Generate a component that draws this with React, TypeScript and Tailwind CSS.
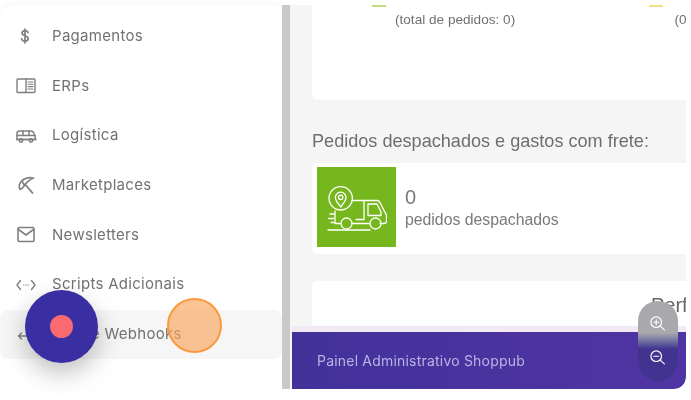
import React from "react";

const side = "font-['Inter','Noto_Sans',sans-serif]";

function Item({ icon, label, active }: { icon: React.ReactNode; label: string; active?: boolean }) {
  return (
    <div className={`flex h-[49.7px] items-center ${active ? "rounded-lg bg-[#f6f6f6]" : ""}`}>
      <div className="flex w-[52px] justify-center text-[#808080]">{icon}</div>
      <span className="text-[15px] tracking-[0.3px] text-[#727272]">{label}</span>
    </div>
  );
}

const s = { fill: "none", stroke: "currentColor", strokeWidth: 1.4, strokeLinecap: "round" as const, strokeLinejoin: "round" as const };

const Dollar = () => (
  <svg width="20" height="20" viewBox="0 0 20 20" className="-ml-[2px]" {...s} strokeWidth={1.7}>
    <path d="M13 6.600c-.3-1.300-1.500-2-3-2-1.800 0-3 1-3 2.500 0 3.400 6.200 2 6.200 5.500 0 1.500-1.400 2.500-3.200 2.500-1.700 0-3-.8-3.300-2.200M10 3v14" />
  </svg>
);
const Erp = () => (
  <svg width="22" height="18" viewBox="0 0 22 18" {...s}>
    <rect x="2" y="2" width="18" height="13.500" rx="1" />
    <path d="M11 2v13.500" />
    <path d="M13 5h5M13 7.300h5M13 9.600h5M13 12h5" strokeWidth="1.100" />
  </svg>
);
const Van = () => (
  <svg width="22" height="18" viewBox="0 0 22 18" {...s} strokeWidth={1.5}>
    <path d="M2 12.500V6.500C2 5 3 4 4.500 4h11.500C17.500 4 18.500 5 19 6.500l1.200 3v3z" />
    <path d="M2 8.500h18M8 4v4.500M14 4v4.500M1.500 12.500h19.500" />
    <circle cx="6" cy="13.500" r="1.700" />
    <circle cx="16" cy="13.500" r="1.700" />
  </svg>
);
const Market = () => (
  <svg width="20" height="20" viewBox="0 0 20 20" {...s} strokeWidth={1.7}>
    <path d="M17.500 3C11.500 1.800 5.500 4 3.500 9.500c-.5 1.800-.3 3.500.5 5 1.600-.5 2.800-1.400 3.600-2.800C9.500 8.500 12 5 17.500 3z" />
    <path d="M9 9.500 C 11 11 13 14 16.500 18M6.500 7l2 3.500" />
  </svg>
);
const Mail = () => (
  <svg width="20" height="18" viewBox="0 0 20 18" {...s} strokeWidth={1.6}>
    <rect x="2" y="1.500" width="16" height="14" rx="1.200" />
    <path d="m2.500 3.500 7.500 5.500 7.500-5.500" />
  </svg>
);
const Code = () => (
  <svg width="22" height="16" viewBox="0 0 22 16" {...s}>
    <path d="M5.500 3.500 2 8l3.500 4.500M16.500 3.500 20 8l-3.500 4.500" />
    <path d="M8.500 8h.4M10.800 8h.4M13.100 8h.4" strokeWidth="1.200" />
  </svg>
);
const Arrows = () => (
  <svg width="20" height="18" viewBox="0 0 20 18" {...s}>
    <path d="M2.500 11h15M5.500 8l-3 3 3 3" />
  </svg>
);

const Truck = () => (
  <svg width="60" height="45" viewBox="0 0 60 45" fill="none" stroke="white" strokeWidth="1.300" strokeLinecap="round" strokeLinejoin="round">
    <circle cx="13.700" cy="12.300" r="11.700" />
    <path d="M13.700 21c-2.500-3.500-5.300-6-5.300-9.500a5.300 5.300 0 0 1 10.600 0c0 3.500-2.800 6-5.300 9.500z" />
    <circle cx="13.700" cy="11.300" r="2.200" />
    <path d="M25 14.500h25c1.500 0 2.500 1 3 2l5 10c1 1 1.500 2 1.500 3.500v5c0 1.500-1 2.500-2.500 2.500h-4" />
    <path d="M8 25v12.500h5M25 37.500h17.500M37 14.500v19h-8" />
    <path d="M41 18h9l4 8v3.500H41z" />
    <circle cx="19.500" cy="37.500" r="5.500" />
    <circle cx="48.500" cy="37.500" r="5.500" />
    <path d="M3 28h4M1.500 32.500h5M4 36.500h3M1 44h42" />
  </svg>
);

const ZoomIcon = ({ plus }: { plus?: boolean }) => (
  <svg width="17" height="17" viewBox="0 0 16 16" fill="none" stroke="white" strokeWidth="1.100" strokeLinecap="round">
    <circle cx="6.800" cy="6.800" r="5" />
    <path d="m10.500 10.500 4 3.500M4.500 6.800h4.600" />
    {plus && <path d="M6.800 4.500v4.600" />}
  </svg>
);

export default function App() {
  return (
    <div className="relative h-[400px] w-[691px] overflow-hidden bg-white blur-[0.4px]">
      <div className="flex h-[389px] pt-[5px] pr-[5px]">
        <aside className={`flex w-[282px] shrink-0 flex-col rounded-tl-xl bg-white pt-[6.400px] shadow-[0_-2px_4px_rgba(0,0,0,0.03)] ${side}`}>
          <Item icon={<Dollar />} label="Pagamentos" />
          <Item icon={<Erp />} label="ERPs" />
          <Item icon={<Van />} label="Logística" />
          <Item icon={<Market />} label="Marketplaces" />
          <Item icon={<Mail />} label="Newsletters" />
          <Item icon={<Code />} label="Scripts Adicionais" />
          <Item icon={<Arrows />} label="API de Webhooks" active />
        </aside>
        <div className="w-[8px] shrink-0 bg-[#c9c9c9]" />
        <main className="flex min-w-0 flex-1 flex-col overflow-hidden rounded-tr-xl rounded-br-xl bg-[#f5f5f5]">
          <div className="min-h-0 flex-1 overflow-hidden pl-[22px] font-['Liberation_Sans',Arial,sans-serif]">
            <section className="flex h-[95px] rounded-tr-xl rounded-bl-md bg-white">
              <div className="relative w-[284px] pl-[83px] pt-[7px] text-[13.600px] leading-[16px] text-[#707070]">
                <div className="absolute top-0 left-[60px] h-[2px] w-[14px] bg-[#c4dc80]" />
                (total de pedidos: 0)
              </div>
              <div className="relative overflow-hidden whitespace-nowrap pl-[83px] pt-[7px] text-[13.600px] leading-[16px] text-[#707070]">
                <div className="absolute top-0 left-[61px] h-[2px] w-[14px] bg-[#f7dc85]" />
                <span className="pl-[4px]">(0</span>
              </div>
            </section>
            <h2 className="mt-[31px] h-[32px] text-[18.100px] leading-[21px] font-normal text-[#6e6e6e]">
              Pedidos despachados e gastos com frete:
            </h2>
            <section className="flex h-[91px] items-start rounded-l-md bg-white py-[4px] pl-[5px]">
              <div className="flex h-[80px] w-[79px] shrink-0 items-start justify-center bg-[#76b71d] pt-[19px]">
                <Truck />
              </div>
              <div className="pl-[9px] pt-[18px] text-[#7a7a7a]">
                <div className="text-[20px] leading-[24px]">0</div>
                <div className="text-[15.800px] leading-[21px]">pedidos despachados</div>
              </div>
            </section>
            <section className="mt-[27px] h-[60px] rounded-l-md bg-white pt-[9px] pl-[339px] text-[20px] whitespace-nowrap text-[#666]">
              Perf
            </section>
          </div>
          <footer className={`ml-[2px] flex h-[57px] shrink-0 items-center rounded-br-xl bg-gradient-to-r from-[#43319a] to-[#4f35a3] pl-[25px] text-[14px] tracking-[0.2px] text-[#b9b4e4] shadow-[0_-6px_0_#f1e9f4] ${side}`}>
            Painel Administrativo Shoppub
          </footer>
        </main>
      </div>

      <div className="absolute top-[290px] left-[25px] flex h-[73px] w-[73px] items-center justify-center rounded-full bg-[#3a2ea3] shadow-[0_10px_24px_rgba(0,0,0,0.25)]">
        <div className="h-[23px] w-[23px] rounded-full bg-[#fa6a70]" />
      </div>
      <div className="absolute top-[298px] left-[167px] h-[55px] w-[55px] rounded-full border-2 border-[#f99a3f] bg-[#f9a45c]/65" />
      <div className="absolute top-[301px] left-[638px] flex h-[80px] w-[40px] flex-col items-center gap-[17px] rounded-full bg-gradient-to-b from-[#a9a9ad] via-[#a9a9ad] via-40% to-[#41338f] to-60% pt-[14px] pr-[1px]">
        <ZoomIcon plus />
        <ZoomIcon />
      </div>
    </div>
  );
}
